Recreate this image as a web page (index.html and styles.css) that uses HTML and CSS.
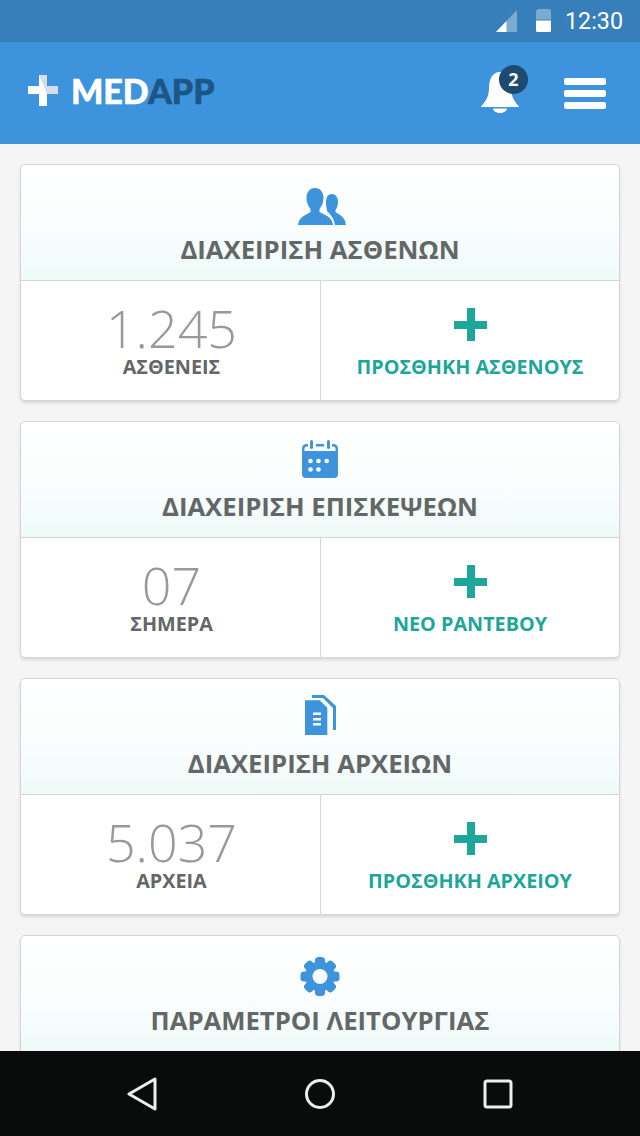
FILE: index.html
```html
<!DOCTYPE html>
<html lang="el">
<head>
    <meta charset="UTF-8">
    <meta name="viewport" content="width=device-width, initial-scale=1.0">
    <title>MedApp</title>
    <link rel="stylesheet" href="styles.css">
</head>
<body>
    <div class="app">
        <div class="statusbar">
            <svg class="signal" width="21" height="22" viewBox="0 0 21 22">
                <path d="M21 0V22H0Z" fill="#fff" opacity=".35"/>
                <path d="M10.500 11V22H0Z" fill="#fff"/>
            </svg>
            <svg class="battery" width="15" height="23" viewBox="0 0 15 23">
                <path d="M3 0H12Q15 0 15 3V10.500H0V3Q0 0 3 0Z" fill="#fff" opacity=".35"/>
                <path d="M0 11.500H15V21.500Q15 23 13.500 23H1.500Q0 23 0 21.500Z" fill="#fff"/>
            </svg>
            <span class="clock">12:30</span>
        </div>

        <header class="topbar">
            <div class="logo">
                <svg width="30" height="31" viewBox="0 0 30 31">
                    <path d="M11 0H19V11H30V19H19V31H11V19H0V11H11Z" fill="#fff"/>
                    <path d="M11 0H19V11H30V19H19Z" fill="#d5deea"/>
                </svg>
                <span class="logo-text">MED<span class="logo-dark">APP</span></span>
            </div>
            <div class="bell">
                <svg width="38" height="42" viewBox="0 0 38 42">
                    <path d="M19 1C11 1 8 9 8 17C8 25 5 30 0 35.500V36H38V35.500C33 30 30 25 30 17C30 9 27 1 19 1Z" fill="#fff"/>
                    <path d="M12 37.500H26C25 43.500 13 43.500 12 37.500Z" fill="#fff"/>
                </svg>
                <span class="badge">2</span>
            </div>
            <div class="burger">
                <span></span>
                <span></span>
                <span></span>
            </div>
        </header>

        <main class="content">
            <section class="card">
                <div class="card-head">
                    <div class="icon-box">
                        <svg class="icon-users" width="48" height="37" viewBox="0 0 48 37">
                            <path d="M17 0C23 0 25.500 5 25.500 10C25.500 15 23 19 21.500 21V24C26 27 34 28 35 37H0C1 28 9 27 12.500 24V21C11 19 8.500 15 8.500 10C8.500 5 11 0 17 0Z" fill="#3d94dc"/>
                            <path d="M34 6C38 6 40 10 40 14C40 18 38.500 20.500 37.500 22V24C41 27 47 28 48 37H37C36 30 32 26 29 23C29 20 27.500 17 28 13C28.500 9 30 6 34 6Z" fill="#3d94dc"/>
                        </svg>
                    </div>
                    <h2 class="card-title">ΔΙΑΧΕΙΡΙΣΗ ΑΣΘΕΝΩΝ</h2>
                </div>
                <div class="card-body">
                    <div class="stat">
                        <span class="stat-num">1.245</span>
                        <span class="stat-label">ΑΣΘΕΝΕΙΣ</span>
                    </div>
                    <a class="action">
                        <span class="plus"></span>
                        <span class="action-label">ΠΡΟΣΘΗΚΗ ΑΣΘΕΝΟΥΣ</span>
                    </a>
                </div>
            </section>

            <section class="card">
                <div class="card-head">
                    <div class="icon-box">
                        <svg class="icon-raised" width="36" height="38" viewBox="0 0 36 38">
                            <path d="M6 5.250H5Q1.250 5.250 1.250 9V13M30 5.250H31Q34.750 5.250 34.750 9V13" fill="none" stroke="#3d94dc" stroke-width="2.500"/>
                            <path d="M0 11H36V34Q36 38 32 38H4Q0 38 0 34Z" fill="#3d94dc"/>
                            <rect x="8" y="0" width="3" height="9" rx="1.500" fill="#3d94dc"/>
                            <rect x="25" y="0" width="3" height="9" rx="1.500" fill="#3d94dc"/>
                            <rect x="14" y="4" width="8" height="2.500" fill="#3d94dc"/>
                            <g fill="#fff">
                                <circle cx="8.500" cy="21" r="2.300"/>
                                <circle cx="16.500" cy="21" r="2.300"/>
                                <circle cx="24.700" cy="21" r="2.300"/>
                                <circle cx="8.500" cy="29.500" r="2.300"/>
                                <circle cx="16.500" cy="29.500" r="2.300"/>
                            </g>
                        </svg>
                    </div>
                    <h2 class="card-title">ΔΙΑΧΕΙΡΙΣΗ ΕΠΙΣΚΕΨΕΩΝ</h2>
                </div>
                <div class="card-body">
                    <div class="stat">
                        <span class="stat-num">07</span>
                        <span class="stat-label">ΣΗΜΕΡΑ</span>
                    </div>
                    <a class="action">
                        <span class="plus"></span>
                        <span class="action-label">ΝΕΟ ΡΑΝΤΕΒΟΥ</span>
                    </a>
                </div>
            </section>

            <section class="card">
                <div class="card-head">
                    <div class="icon-box">
                        <svg class="icon-raised" width="31" height="40" viewBox="0 0 31 40">
                            <path d="M7 0H19L31 11V35H28V13L18 3H7Z" fill="#3d94dc"/>
                            <path d="M0 5.300H14.700L22.300 12.700V40H0Z" fill="#3d94dc"/>
                            <g fill="#fff">
                                <rect x="8" y="17.500" width="8" height="2.500"/>
                                <rect x="8" y="23" width="8" height="2.500"/>
                                <rect x="8" y="28" width="8" height="2.500"/>
                            </g>
                        </svg>
                    </div>
                    <h2 class="card-title">ΔΙΑΧΕΙΡΙΣΗ ΑΡΧΕΙΩΝ</h2>
                </div>
                <div class="card-body">
                    <div class="stat">
                        <span class="stat-num">5.037</span>
                        <span class="stat-label">ΑΡΧΕΙΑ</span>
                    </div>
                    <a class="action">
                        <span class="plus"></span>
                        <span class="action-label">ΠΡΟΣΘΗΚΗ ΑΡΧΕΙΟΥ</span>
                    </a>
                </div>
            </section>

            <section class="card">
                <div class="card-head">
                    <div class="icon-box">
                        <svg width="40" height="39" viewBox="-20 -19.500 40 39">
                            <g fill="#3d94dc">
                                <circle r="15"/>
                                <rect x="-5" y="-19.500" width="10" height="39" rx="3.500"/>
                                <rect x="-5" y="-19.500" width="10" height="39" rx="3.500" transform="rotate(45)"/>
                                <rect x="-5" y="-19.500" width="10" height="39" rx="3.500" transform="rotate(90)"/>
                                <rect x="-5" y="-19.500" width="10" height="39" rx="3.500" transform="rotate(135)"/>
                            </g>
                            <circle r="7.500" fill="#f9fdfd"/>
                        </svg>
                    </div>
                    <h2 class="card-title">ΠΑΡΑΜΕΤΡΟΙ ΛΕΙΤΟΥΡΓΙΑΣ</h2>
                </div>
            </section>
        </main>

        <nav class="navbar">
            <svg width="30" height="34" viewBox="0 0 30 34">
                <path d="M28 2V32L2 17Z" fill="none" stroke="#eee" stroke-width="3" stroke-linejoin="round"/>
            </svg>
            <svg width="32" height="32" viewBox="0 0 32 32">
                <circle cx="16" cy="16" r="13.500" fill="none" stroke="#eee" stroke-width="3"/>
            </svg>
            <svg width="30" height="30" viewBox="0 0 30 30">
                <rect x="2" y="2" width="26" height="26" rx="2" fill="none" stroke="#eee" stroke-width="3"/>
            </svg>
        </nav>
    </div>
</body>
</html>
```

FILE: styles.css
```css
* {
    box-sizing: border-box;
}

body {
    margin: 0;
    font-family: "Open Sans", "Liberation Sans", sans-serif;
}

.app {
    display: flex;
    flex-direction: column;
    height: 1136px;
    overflow: hidden;
    background-color: #f5f5f5;
}

.statusbar {
    display: flex;
    align-items: center;
    justify-content: flex-end;
    flex-shrink: 0;
    height: 42px;
    padding: 0 17px 1px 0;
    background-color: #377fbb;
}

.signal {
    margin: 0 19px 0 0;
}

.battery {
    margin: 0 14px 0 0;
}

.clock {
    font-family: Roboto, sans-serif;
    font-size: 23.300px;
    color: #fff;
}

.topbar {
    display: flex;
    align-items: center;
    flex-shrink: 0;
    height: 102px;
    padding: 0 34px 0 28px;
    background-color: #3d94dc;
}

.logo {
    display: flex;
    align-items: center;
    gap: 13px;
    flex-grow: 1;
    margin: 0 0 6px 0;
}

.logo-text {
    font-family: Lato, sans-serif;
    font-weight: 900;
    font-size: 34px;
    color: #fff;
    -webkit-text-stroke: .6px currentColor;
}

.logo-dark {
    color: #1b5687;
}

.bell {
    position: relative;
    height: 42px;
    margin: 0 45px 2px 0;
}

.badge {
    position: absolute;
    top: -6px;
    left: 18px;
    width: 29px;
    height: 29px;
    border-radius: 50%;
    background-color: #1c4a70;
    color: #fff;
    font-size: 18px;
    font-weight: 700;
    line-height: 29px;
    text-align: center;
}

.burger {
    display: flex;
    flex-direction: column;
    gap: 5px;
    padding: 1px 0 0 0;
}

.burger span {
    width: 42px;
    height: 7px;
    border-radius: 2px;
    background-color: #fff;
}

.content {
    flex-grow: 1;
    min-height: 0;
    overflow: hidden;
    padding: 20px 20px 0 20px;
}

.card {
    height: 237px;
    margin: 0 0 20px 0;
    background-color: #fff;
    border: 1px solid #d6d6d6;
    border-radius: 5px;
    box-shadow: 0 2px 3px rgba(0, 0, 0, .12);
}

.card-head {
    display: flex;
    flex-direction: column;
    align-items: center;
    height: 116px;
    padding: 16px 0 0 0;
    background: linear-gradient(#fff, #fbfefe 50%, #eefaf8);
    border-bottom: 1px solid #d6d6d6;
    border-radius: 5px 5px 0 0;
}

.icon-box {
    display: flex;
    align-items: flex-end;
    justify-content: center;
    flex-shrink: 0;
    height: 44px;
}

.icon-users {
    margin: 0 0 0 4px;
}

.icon-raised {
    margin: 0 0 4px 0;
}

.card-title {
    margin: 8px 0 0 0;
    font-size: 25.700px;
    font-weight: 700;
    line-height: 34px;
    color: #636767;
}

.card-body {
    display: flex;
    height: 119px;
}

.stat, .action {
    display: flex;
    flex-direction: column;
    align-items: center;
}

.stat {
    flex: 0 0 300px;
    padding: 21px 0 0 2px;
    border-right: 1px solid #d6d6d6;
}

.stat-num {
    font-size: 52px;
    font-weight: 300;
    line-height: 52px;
    color: #999;
}

.stat-label {
    margin: 1px 0 0 0;
    font-size: 19.800px;
    font-weight: 700;
    line-height: 24px;
    color: #636767;
}

.action {
    flex: 1 1 0;
    padding: 27px 0 0 0;
}

.plus {
    width: 33px;
    height: 33px;
    margin: 0 0 0 1px;
    background:
        linear-gradient(#1ea69a, #1ea69a) center / 100% 8px no-repeat,
        linear-gradient(#1ea69a, #1ea69a) center / 8px 100% no-repeat;
}

.action-label {
    margin: 14px 0 0 0;
    font-size: 19.800px;
    font-weight: 700;
    line-height: 24px;
    color: #1ea69a;
}

.navbar {
    display: flex;
    align-items: center;
    justify-content: space-between;
    flex-shrink: 0;
    height: 85px;
    padding: 0 127px;
    background-color: #0a0b0b;
}
```
